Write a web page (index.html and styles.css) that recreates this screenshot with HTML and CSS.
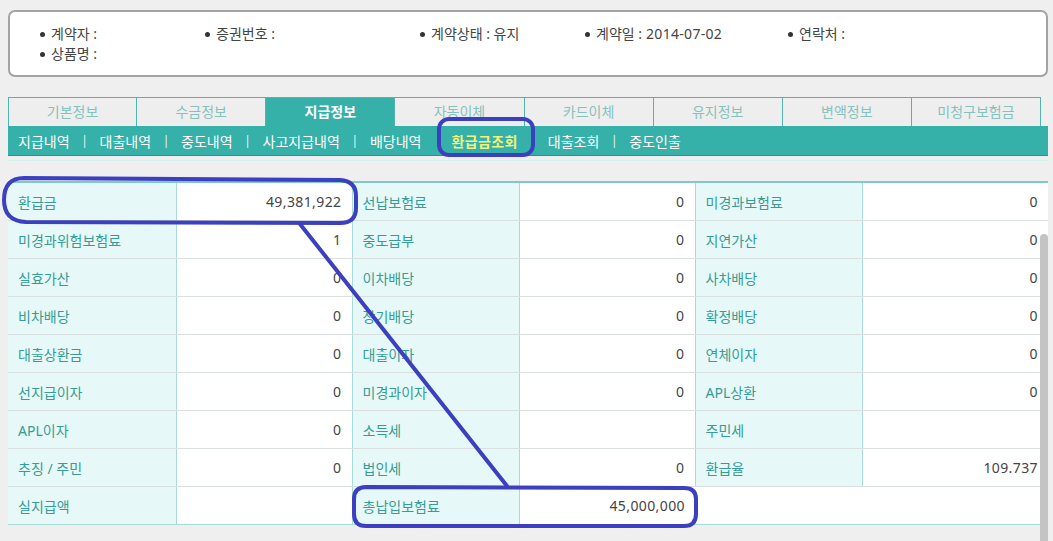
FILE: index.html
```html
<!DOCTYPE html>
<html lang="ko">
<head>
<meta charset="utf-8">
<title>환급금조회</title>
<link rel="stylesheet" href="styles.css">
</head>
<body>
<div class="page">
  <div class="info-box">
    <ul class="info-list">
      <li>계약자 :</li>
      <li>증권번호 :</li>
      <li>계약상태 : 유지</li>
      <li>계약일 : <span class="num">2014-07-02</span></li>
      <li>연락처 :</li>
      <li>상품명 :</li>
    </ul>
  </div>

  <div class="tabs">
    <div class="tab">기본정보</div>
    <div class="tab">수금정보</div>
    <div class="tab active">지급정보</div>
    <div class="tab">자동이체</div>
    <div class="tab">카드이체</div>
    <div class="tab">유지정보</div>
    <div class="tab">변액정보</div>
    <div class="tab">미청구보험금</div>
  </div>
  <div class="subnav">
    <span class="sub">지급내역</span><span class="sep">|</span>
    <span class="sub">대출내역</span><span class="sep">|</span>
    <span class="sub">중도내역</span><span class="sep">|</span>
    <span class="sub">사고지급내역</span><span class="sep">|</span>
    <span class="sub">배당내역</span><span class="sep"></span>
    <span class="sub current">환급금조회</span><span class="sep"></span>
    <span class="sub">대출조회</span><span class="sep">|</span>
    <span class="sub">중도인출</span>
  </div>
  <div class="rule"></div>

  <table class="grid">
    <colgroup>
      <col class="c-lab1"><col class="c-val1"><col class="c-lab2"><col class="c-val2"><col class="c-lab3"><col class="c-val3">
    </colgroup>
    <tr><th>환급금</th><td>49,381,922</td><th>선납보험료</th><td>0</td><th>미경과보험료</th><td>0</td></tr>
    <tr><th>미경과위험보험료</th><td>1</td><th>중도급부</th><td>0</td><th>지연가산</th><td>0</td></tr>
    <tr><th>실효가산</th><td>0</td><th>이차배당</th><td>0</td><th>사차배당</th><td>0</td></tr>
    <tr><th>비차배당</th><td>0</td><th>장기배당</th><td>0</td><th>확정배당</th><td>0</td></tr>
    <tr><th>대출상환금</th><td>0</td><th>대출이자</th><td>0</td><th>연체이자</th><td>0</td></tr>
    <tr><th>선지급이자</th><td>0</td><th>미경과이자</th><td>0</td><th>APL상환</th><td>0</td></tr>
    <tr><th>APL이자</th><td>0</td><th>소득세</th><td></td><th>주민세</th><td></td></tr>
    <tr><th>추징 / 주민</th><td>0</td><th>법인세</th><td>0</td><th>환급율</th><td>109.737</td></tr>
    <tr class="last"><th>실지급액</th><td></td><th>총납입보험료</th><td>45,000,000</td><td class="blank" colspan="2"></td></tr>
  </table>
</div>

<div class="thumb"></div>

<svg class="marks" width="1053" height="541" viewBox="0 0 1053 541" xmlns="http://www.w3.org/2000/svg">
  <g fill="none" stroke="#3b3fc0" stroke-width="4" stroke-linejoin="round" stroke-linecap="round">
    <rect x="439" y="119" width="94" height="36" rx="10" ry="10"/>
    <path d="M24 178 L340 180 Q356 181 356 196 L356 208 Q356 223 340 223 L26 222 Q4 221 4 200 Q4 178 24 178 Z"/>
    <line x1="300" y1="224" x2="507" y2="486"/>
    <path d="M366 487 L684 488 Q696 488 696 499 L696 514 Q696 526 684 526 L366 526 Q354 526 354 514 L354 499 Q354 487 366 487 Z"/>
  </g>
</svg>
</body>
</html>
```

FILE: styles.css
```css
html, body {
  margin: 0;
  padding: 0;
  background: #efefef;
}

body {
  position: relative;
  width: 1053px;
  height: 541px;
  overflow: hidden;
  font-family: "Noto Sans", "Noto Sans CJK KR", sans-serif;
  font-size: 14px;
  color: #444;
}

.page {
  padding: 10px 0 0 8px;
  width: 1040px;
}

/* top info box */
.info-box {
  box-sizing: border-box;
  width: 1040px;
  height: 67px;
  background: #fff;
  border: 2px solid #a3a3a3;
  border-radius: 7px;
  padding: 12px 0 0 30px;
}

.info-list {
  list-style: none;
  margin: 0;
  padding: 0;
  display: grid;
  grid-template-columns: 165px 215px 165px 203px auto;
  grid-auto-rows: 20px;
}

.info-list li {
  display: flex;
  align-items: center;
  line-height: 20px;
  white-space: nowrap;
  font-size: 14px;
}

.info-list li::before {
  content: "";
  width: 5px;
  height: 5px;
  border-radius: 50%;
  background: #333;
  margin-right: 6px;
  flex: none;
}

.num {
  font-size: 14px;
  margin-left: 4px;
  letter-spacing: 0.3px;
}

/* tabs */
.tabs {
  margin-top: 20px;
  width: 1033px;
  display: grid;
  grid-template-columns: repeat(8, 1fr);
}

.tab {
  box-sizing: border-box;
  height: 29px;
  line-height: 27px;
  text-align: center;
  background: #eeeeee;
  color: #86c2bd;
  border-top: 1px solid #4fb5ae;
  border-right: 1px solid #4fb5ae;
  font-size: 14px;
}

.tab:first-child {
  border-left: 1px solid #4fb5ae;
}

.tab.active {
  background: #35b1a9;
  color: #fff;
  font-weight: bold;
}

/* sub navigation */
.subnav {
  box-sizing: border-box;
  width: 1040px;
  height: 30px;
  background: #35b1a9;
  border-bottom: 1px solid #2a918a;
  padding-left: 10px;
  display: flex;
  align-items: center;
  color: #fff;
  font-size: 14px;
}

.sub {
  white-space: nowrap;
}

.sub.current {
  color: #f2f27c;
  font-weight: bold;
  letter-spacing: 0.4px;
}

.sep {
  width: 30px;
  text-align: center;
  color: #e6f5f4;
  font-size: 12px;
}

.rule {
  width: 1040px;
  height: 1px;
  margin-top: 4px;
  background: #d2eeec;
}

/* data grid */
.grid {
  margin-top: 20px;
  width: 1040px;
  table-layout: fixed;
  border-collapse: collapse;
  border-top: 2px solid #7ecbc5;
  background: #fff;
}

.c-lab1 { width: 168px; }
.c-val1 { width: 176px; }
.c-lab2 { width: 167px; }
.c-val2 { width: 176px; }
.c-lab3 { width: 167px; }
.c-val3 { width: 186px; }

.grid th,
.grid td {
  height: 37px;
  padding: 0;
  border-bottom: 1px solid #dadfdf;
  font-weight: normal;
  white-space: nowrap;
}

.grid th {
  text-align: left;
  padding-left: 10px;
  background: #e6f9f8;
  color: #379c95;
  border-left: 1px solid #a9dcd8;
  border-right: 1px solid #a9dcd8;
  font-size: 14px;
}

.grid th:first-child {
  border-left: none;
}

.grid td {
  text-align: right;
  padding-right: 10px;
  color: #444;
  font-size: 14px;
  letter-spacing: 0.4px;
}

.grid tr.last th,
.grid tr.last td {
  border-bottom: 1px solid #a9dcd8;
}

.grid td.blank {
  background: #fff;
}

/* scrollbar thumb overlaying the grid */
.thumb {
  position: absolute;
  left: 1040px;
  top: 234px;
  width: 8px;
  height: 330px;
  border-radius: 4px 4px 0 0;
  background: #c4c4c4;
}

/* annotation overlay */
.marks {
  position: absolute;
  left: 0;
  top: 0;
  pointer-events: none;
}
```
